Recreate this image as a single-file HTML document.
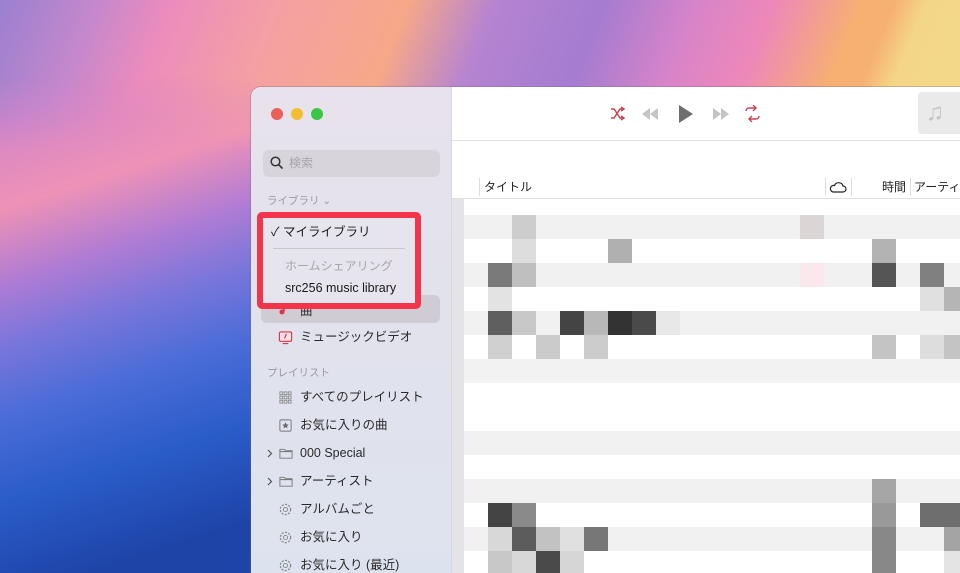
<!DOCTYPE html>
<html><head><meta charset="utf-8"><style>
*{margin:0;padding:0;box-sizing:border-box}
body{width:960px;height:573px;overflow:hidden;position:relative;font-family:"Liberation Sans","Noto Sans CJK JP",sans-serif;
background:linear-gradient(112deg,#9a80d0 0px,#c488cc 90px,#ec8cbc 160px,#f4a0a4 260px,#f6a888 380px,#b684d0 460px,#a47cd0 560px,#d884c8 650px,#ee88b8 720px,#f6b072 800px,#f6b072 830px,#f4d688 860px,#f4da8c 960px);}
.lower{position:absolute;left:0;top:0;width:251px;height:573px;
background:linear-gradient(162deg,#b27ed2 0px,#d686c6 120px,#ee92b6 200px,#b07cd4 270px,#7a76da 330px,#4a6cd8 400px,#2a5cc8 480px,#1e44a8 573px);
-webkit-mask-image:linear-gradient(180deg,transparent 75px,#000 150px);mask-image:linear-gradient(180deg,transparent 75px,#000 150px);}
.win{position:absolute;left:251px;top:87px;width:709px;height:486px;border-radius:10px 0 0 0;overflow:hidden;background:#fff;box-shadow:0 0 0 1px rgba(120,100,140,.35)}
.side{position:absolute;left:0;top:0;width:201px;height:486px;background:linear-gradient(180deg,#e8e2ec 0,#e2e2ec 200px,#dde3ee 486px);border-right:1px solid #d8d8dc}
.dot{position:absolute;top:21px;width:12px;height:12px;border-radius:50%}
.search{position:absolute;left:12px;top:63px;width:177px;height:27px;border-radius:6px;background:#d8d4dc;color:#a8a4ac;font-size:12px;line-height:27px;padding-left:26px}
.sh{position:absolute;left:16px;font-size:10.5px;line-height:14px;color:#9c98a4}
.it{position:absolute;left:49px;font-size:12.5px;line-height:16px;color:#2a2a2a;white-space:nowrap}
.ic{position:absolute;left:27px;width:15px;height:15px}
.main{position:absolute;left:201px;top:0;right:0;height:486px}
.cell{position:absolute;width:24px;height:24px}
.row{position:absolute;left:12px;right:0;height:24px}
</style></head><body>
<div class="lower"></div>
<div class="win">
 <div class="side">
  <div class="dot" style="left:20px;background:#ec5f57"></div>
  <div class="dot" style="left:40px;background:#f4bd30"></div>
  <div class="dot" style="left:60px;background:#3cc648"></div>
  <div class="search"><svg style="position:absolute;left:7px;top:6px" width="14" height="14" viewBox="0 0 14 14"><circle cx="5.5" cy="5.5" r="4.3" fill="none" stroke="#333" stroke-width="1.5"/><path d="M8.6 8.6L12.5 12.5" stroke="#333" stroke-width="1.6"/></svg>検索</div>
  <div class="sh" style="top:107px">ライブラリ ⌄</div>
  <div style="position:absolute;left:10px;top:208px;width:179px;height:28px;border-radius:6px;background:#d0ccd4"></div>
  <svg style="position:absolute;left:27px;top:214px" width="10" height="16" viewBox="0 0 10 16"><path d="M6 0v10" stroke="#e0304a" stroke-width="1.6"/><circle cx="4" cy="11" r="2.5" fill="#e0304a"/></svg>
  <div class="it" style="top:216px">曲</div>
  <svg class="ic" style="top:243px" viewBox="0 0 16 16"><rect x="1.5" y="2" width="13" height="10" rx="1.5" fill="#fbe2e6" stroke="#e0304a" stroke-width="1.2"/><path d="M5 14.5h6" stroke="#e0304a" stroke-width="1.2"/><path d="M9 4l-2 5" stroke="#e0304a" stroke-width="1.2"/></svg>
  <div class="it" style="top:242px">ミュージックビデオ</div>
  <div class="sh" style="top:279px">プレイリスト</div>
  <svg class="ic" style="top:303px" viewBox="0 0 16 16" fill="none" stroke="#888" stroke-width="0.9"><rect x="2" y="2" width="3" height="3"/><rect x="6.5" y="2" width="3" height="3"/><rect x="11" y="2" width="3" height="3"/><rect x="2" y="6.5" width="3" height="3"/><rect x="6.5" y="6.5" width="3" height="3"/><rect x="11" y="6.5" width="3" height="3"/><rect x="2" y="11" width="3" height="3"/><rect x="6.5" y="11" width="3" height="3"/><rect x="11" y="11" width="3" height="3"/></svg>
  <div class="it" style="top:302px">すべてのプレイリスト</div>
  <svg class="ic" style="top:331px" viewBox="0 0 16 16"><rect x="2" y="2" width="12" height="12" rx="1.5" fill="none" stroke="#777" stroke-width="1"/><path d="M8 4.5l1 2.3 2.4.2-1.8 1.6.6 2.4L8 9.7 5.8 11l.6-2.4L4.6 7l2.4-.2z" fill="#666"/></svg>
  <div class="it" style="top:330px">お気に入りの曲</div>
  <svg style="position:absolute;left:16px;top:362px" width="6" height="9" viewBox="0 0 6 9"><path d="M1 1l3.5 3.5L1 8" fill="none" stroke="#555" stroke-width="1.2"/></svg>
  <svg class="ic" style="top:359px;width:16px" viewBox="0 0 16 16"><path d="M1.5 3.5h4.5l1.5 1.5h7v8h-13z M1.5 6h13" fill="none" stroke="#777" stroke-width="1"/></svg>
  <div class="it" style="top:358px">000 Special</div>
  <svg style="position:absolute;left:16px;top:390px" width="6" height="9" viewBox="0 0 6 9"><path d="M1 1l3.5 3.5L1 8" fill="none" stroke="#555" stroke-width="1.2"/></svg>
  <svg class="ic" style="top:387px;width:16px" viewBox="0 0 16 16"><path d="M1.5 3.5h4.5l1.5 1.5h7v8h-13z M1.5 6h13" fill="none" stroke="#777" stroke-width="1"/></svg>
  <div class="it" style="top:386px">アーティスト</div>
  <svg class="ic" style="top:415px" viewBox="0 0 16 16"><circle cx="8" cy="8" r="5.5" fill="none" stroke="#888" stroke-width="1.3" stroke-dasharray="2.2 1.4"/><circle cx="8" cy="8" r="2.2" fill="none" stroke="#888" stroke-width="1"/></svg>
  <div class="it" style="top:414px">アルバムごと</div>
  <svg class="ic" style="top:443px" viewBox="0 0 16 16"><circle cx="8" cy="8" r="5.5" fill="none" stroke="#888" stroke-width="1.3" stroke-dasharray="2.2 1.4"/><circle cx="8" cy="8" r="2.2" fill="none" stroke="#888" stroke-width="1"/></svg>
  <div class="it" style="top:442px">お気に入り</div>
  <svg class="ic" style="top:471px" viewBox="0 0 16 16"><circle cx="8" cy="8" r="5.5" fill="none" stroke="#888" stroke-width="1.3" stroke-dasharray="2.2 1.4"/><circle cx="8" cy="8" r="2.2" fill="none" stroke="#888" stroke-width="1"/></svg>
  <div class="it" style="top:470px">お気に入り (最近)</div>
  <div style="position:absolute;left:6px;top:125px;width:164px;height:97px;border:6px solid #f3344a;border-radius:5px;background:#e6e4ec">
   <div style="position:absolute;left:8px;top:6px;font-size:12.5px;line-height:16px;color:#1a1a1a">✓ マイライブラリ</div>
   <div style="position:absolute;left:10px;right:10px;top:30px;height:1px;background:#c8c6cc"></div>
   <div style="position:absolute;left:22px;top:40px;font-size:12px;line-height:16px;color:#a8a6ac">ホームシェアリング</div>
   <div style="position:absolute;left:22px;top:62px;font-size:12.5px;line-height:16px;color:#1a1a1a">src256 music library</div>
  </div>
 </div>
 <div class="main">
  <svg style="position:absolute;left:158px;top:18px" width="150" height="18" viewBox="0 0 150 18">
   <path d="M1 4h3l6 9h4M1 13h3l6-9h4M11 2l3 2-3 2M11 11l3 2-3 2" fill="none" stroke="#d04050" stroke-width="1.4"/>
   <path d="M48 3v12L40 9zM40 3v12L32 9z" fill="#c4c4c4"/>
   <path d="M69 0v18l14-9z" fill="#6e6e6e"/>
   <path d="M103 3v12l8-6zM111 3v12l8-6z" fill="#c4c4c4"/>
   <path d="M136 6a3 3 0 0 1 3-3h7M143 0l3 3-3 3M149 11a3 3 0 0 1-3 3h-7M142 17l-3-3 3-3" fill="none" stroke="#d04050" stroke-width="1.4"/>
  </svg>
  <div style="position:absolute;left:466px;top:5px;width:50px;height:42px;border-radius:4px;background:#eaeaea;color:#c4c4c4;font-size:24px;line-height:42px;padding-left:8px">♫</div>
  <div style="position:absolute;left:0;right:0;top:53px;height:1px;background:#e4e4e4"></div>
  <div style="position:absolute;left:27px;top:91px;width:1px;height:18px;background:#ddd"></div>
  <div style="position:absolute;left:32px;top:92px;font-size:12px;line-height:16px;color:#222">タイトル</div>
  <div style="position:absolute;left:373px;top:91px;width:1px;height:18px;background:#ddd"></div>
  <svg style="position:absolute;left:377px;top:94px" width="18" height="12" viewBox="0 0 18 12"><path d="M4 11h10a3 3 0 0 0 0-6 4.5 4.5 0 0 0-8.5-.5A3 3 0 0 0 4 11z" fill="none" stroke="#222" stroke-width="1.2"/></svg>
  <div style="position:absolute;left:399px;top:91px;width:1px;height:18px;background:#ddd"></div>
  <div style="position:absolute;left:430px;top:92px;font-size:12px;line-height:16px;color:#222">時間</div>
  <div style="position:absolute;left:458px;top:91px;width:1px;height:18px;background:#ddd"></div>
  <div style="position:absolute;left:462px;top:92px;font-size:12px;line-height:16px;color:#222;white-space:nowrap">アーティ</div>
  <div style="position:absolute;left:0;right:0;top:111px;height:1px;background:#e0e0e0"></div>
  <div style="position:absolute;left:0;top:112px;width:12px;height:374px;background:#e4e4e8"></div>
  <div class="row" style="top:128px;background:#f1f1f1"></div>
  <div class="row" style="top:176px;background:#f1f1f1"></div>
  <div class="row" style="top:224px;background:#f1f1f1"></div>
  <div class="row" style="top:272px;background:#f2f2f2"></div>
  <div class="row" style="top:344px;background:#f1f1f1"></div>
  <div class="row" style="top:392px;background:#f1f1f1"></div>
  <div class="row" style="top:440px;background:#f1f1f1"></div>
  <div class="cell" style="left:60px;top:128px;background:#cdcdcd"></div>
  <div class="cell" style="left:348px;top:128px;background:#dbd6d5"></div>
  <div class="cell" style="left:60px;top:152px;background:#ddd"></div>
  <div class="cell" style="left:156px;top:152px;background:#b0b0b0"></div>
  <div class="cell" style="left:420px;top:152px;background:#b3b3b3"></div>
  <div class="cell" style="left:36px;top:176px;background:#7a7a7a"></div>
  <div class="cell" style="left:60px;top:176px;background:#bfbfbf"></div>
  <div class="cell" style="left:348px;top:176px;background:#fbe8ec"></div>
  <div class="cell" style="left:420px;top:176px;background:#555"></div>
  <div class="cell" style="left:468px;top:176px;background:#808080"></div>
  <div class="cell" style="left:36px;top:200px;background:#e3e3e3"></div>
  <div class="cell" style="left:468px;top:200px;background:#e0e0e0"></div>
  <div class="cell" style="left:492px;top:200px;background:#b5b5b5"></div>
  <div class="cell" style="left:36px;top:224px;background:#5f5f5f"></div>
  <div class="cell" style="left:60px;top:224px;background:#c8c8c8"></div>
  <div class="cell" style="left:108px;top:224px;background:#444"></div>
  <div class="cell" style="left:132px;top:224px;background:#b8b8b8"></div>
  <div class="cell" style="left:156px;top:224px;background:#333"></div>
  <div class="cell" style="left:180px;top:224px;background:#4a4a4a"></div>
  <div class="cell" style="left:204px;top:224px;background:#e8e8e8"></div>
  <div class="cell" style="left:36px;top:248px;background:#d0d0d0"></div>
  <div class="cell" style="left:84px;top:248px;background:#cbcbcb"></div>
  <div class="cell" style="left:132px;top:248px;background:#ccc"></div>
  <div class="cell" style="left:420px;top:248px;background:#c4c4c4"></div>
  <div class="cell" style="left:468px;top:248px;background:#ddd"></div>
  <div class="cell" style="left:492px;top:248px;background:#c4c4c4"></div>
  <div class="cell" style="left:420px;top:392px;background:#a6a6a6"></div>
  <div class="cell" style="left:36px;top:416px;background:#444"></div>
  <div class="cell" style="left:60px;top:416px;background:#8a8a8a"></div>
  <div class="cell" style="left:420px;top:416px;background:#999"></div>
  <div class="cell" style="left:468px;top:416px;background:#6e6e6e"></div>
  <div class="cell" style="left:492px;top:416px;background:#6e6e6e"></div>
  <div class="cell" style="left:36px;top:440px;background:#d8d8d8"></div>
  <div class="cell" style="left:60px;top:440px;background:#5c5c5c"></div>
  <div class="cell" style="left:84px;top:440px;background:#c2c2c2"></div>
  <div class="cell" style="left:108px;top:440px;background:#e0e0e0"></div>
  <div class="cell" style="left:132px;top:440px;background:#777"></div>
  <div class="cell" style="left:420px;top:440px;background:#888"></div>
  <div class="cell" style="left:492px;top:440px;background:#a4a4a4"></div>
  <div class="cell" style="left:36px;top:464px;background:#c8c8c8"></div>
  <div class="cell" style="left:60px;top:464px;background:#d8d8d8"></div>
  <div class="cell" style="left:84px;top:464px;background:#4a4a4a"></div>
  <div class="cell" style="left:108px;top:464px;background:#d6d6d6"></div>
  <div class="cell" style="left:420px;top:464px;background:#888"></div>
  <div class="cell" style="left:492px;top:464px;background:#e4e4e4"></div>
 </div>
</div>
</body></html>
